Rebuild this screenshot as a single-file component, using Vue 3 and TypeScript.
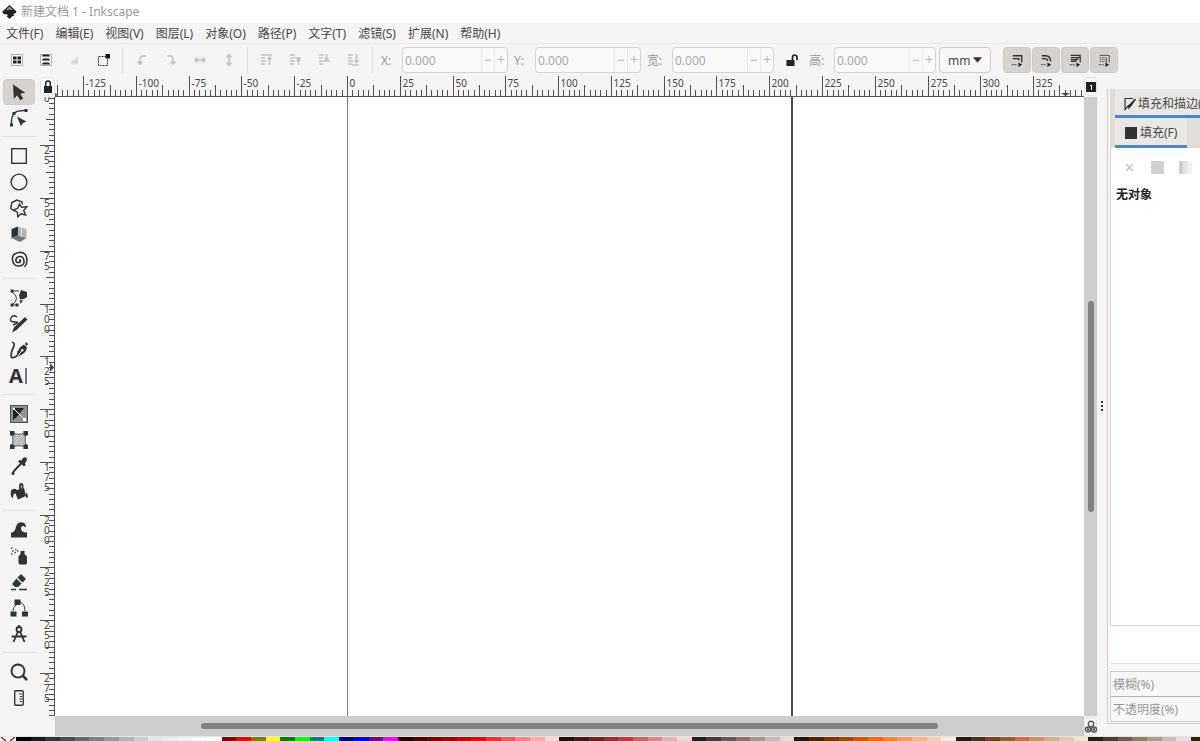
<script setup lang="ts">
import { computed, onMounted, onUnmounted, ref } from 'vue'

interface Tick { pos: number; size: number; label: string }
interface Item { name: string; art: string }

const menus: string[] = ['文件(F)', '编辑(E)', '视图(V)', '图层(L)', '对象(O)', '路径(P)', '文字(T)', '滤镜(S)', '扩展(N)', '帮助(H)']

const scale = 2.111
const originX = 292.5
const originY = -4.5
const pageRight = originX + 210 * scale

const viewWidth = ref(window.innerWidth)
const viewHeight = ref(window.innerHeight)
function measure(): void {
  viewWidth.value = window.innerWidth
  viewHeight.value = window.innerHeight
}
onMounted(() => window.addEventListener('resize', measure))
onUnmounted(() => window.removeEventListener('resize', measure))

function makeTicks(origin: number, length: number, sizes: number[]): Tick[] {
  const step = 2.5 * scale
  const list: Tick[] = []
  for (let n = Math.ceil(-origin / step) - 1; origin + n * step < length; n++) {
    const major = n % 10 === 0
    const size = major ? sizes[0] : n % 5 === 0 ? sizes[1] : sizes[2]
    list.push({ pos: Math.round(origin + n * step) + 0.5, size, label: major ? String((n / 10) * 25) : '' })
  }
  return list
}
const hTicks = computed(() => makeTicks(originX - 0.5, viewWidth.value - 172, [20, 11, 6]))
const vTicks = computed(() => makeTicks(originY, viewHeight.value - 122, [14, 8, 5]))

const ghost = 'fill="none" stroke="#c4c2c0" stroke-width="1.6"'
const bars = '<path d="M2 3h5M2 6h4M2 9h5M2 12h4" stroke="#c4c2c0" stroke-width="1.4"/>'
const actionGroups: Item[][] = [
  [
    { name: '全选', art: '<rect x="2.5" y="2.5" width="11" height="11" fill="none" stroke="#777" stroke-dasharray="1 1"/><path d="M4 4.5h3.5v3H4zM8.5 4.5H12v3H8.5zM4 8.5h3.5v3H4zM8.5 8.5H12v3H8.5z" fill="#222"/>' },
    { name: '在所有图层中全选', art: '<rect x="2.5" y="2.5" width="11" height="11" fill="none" stroke="#777" stroke-dasharray="1 1"/><path d="M5 2.5h6l1 2H4zM5 6.5h6l1 2H4zM5 10.5h6l1 2H4z" fill="#222"/>' },
    { name: '取消选择', art: '<path d="M4 9l3-1 4-4v7l-4 2-3-1z" fill="#dddbd9"/>' },
    { name: '切换选择框', art: '<rect x="2.5" y="4.5" width="9" height="9" fill="none" stroke="#333" stroke-dasharray="2 1"/><path d="M9.5 2H14v4.5H9.5z" fill="#111"/>' }
  ],
  [
    { name: '逆时针旋转', art: `<path d="M12 4H9Q6 4 6 8v4M3.5 9.5L6 12l2.5-2.5" ${ghost}/>` },
    { name: '顺时针旋转', art: `<path d="M4 4h3q3 0 3 4v4M7.5 9.5L10 12l2.5-2.5" ${ghost}/>` },
    { name: '水平翻转', art: `<path d="M3 8h10M5.5 5.5L3 8l2.5 2.5M10.5 5.5L13 8l-2.5 2.5" ${ghost}/>` },
    { name: '垂直翻转', art: `<path d="M8 3v10M5.5 5.5L8 3l2.5 2.5M5.5 10.5L8 13l2.5-2.5" ${ghost}/>` }
  ],
  [
    { name: '置于顶层', art: `${bars}<path d="M7 3h6M10.5 13V5M8.5 7.5l2-2 2 2" ${ghost}/>` },
    { name: '提升一层', art: `${bars}<path d="M7 6h6M10.5 13V7M8.5 9l2-2 2 2" ${ghost}/>` },
    { name: '降低一层', art: `${bars}<path d="M7 9h6M9.5 2v6M7.5 6l2 2 2-2" ${ghost}/>` },
    { name: '置于底层', art: `${bars}<path d="M6 13h7M10.5 2v9M8.5 8.5l2 2 2-2" ${ghost}/>` }
  ]
]

const tail = '<path d="M2 12.5h6" stroke="#333" stroke-dasharray="2 1"/><path d="M9 10l4 2.5L9 15z" fill="#222"/>'
const toggles: Item[] = [
  { name: '缩放描边宽度', art: '<path d="M3 3h9.5v7M3 6h6.5v2" fill="none" stroke="#333" stroke-width="1.5"/>' + tail },
  { name: '缩放圆角', art: '<path d="M3 3h4q5 0 5.5 6M3 6h3q3 0 3.5 2.5" fill="none" stroke="#333" stroke-width="1.5"/>' + tail },
  { name: '移动渐变', art: '<path d="M3 2.5h10V10M3 5h7M3 7h6M3 9h5M8 9l4-5" fill="none" stroke="#333" stroke-width="1.3"/>' + tail },
  { name: '移动图案', art: '<path d="M3 2.5h10V10M10 5v5" fill="none" stroke="#444"/><path d="M3 5h6M3 7h6M3 9h6" stroke="#444" stroke-dasharray="1.5 1"/>' + tail }
]

const line = 'fill="none" stroke="#2e3436" stroke-width="1.4"'
const toolGroups: Item[][] = [
  [
    { name: '选择工具', art: '<path d="M4 2.5l.8 14.5 3.4-3.7 3 5 3-1.8-3-4.8 5-1z"/>' },
    { name: '节点工具', art: `<path d="M2.5 17Q2 8 5.5 5T17 2.5" ${line}/><path d="M1 15.5h3v3H1zM3.5 4h3v3h-3zM15.5 1h3v3h-3zM8 8.5l9.5 5-3.5 1.5-2.2 3z"/>` }
  ],
  [
    { name: '矩形', art: `<rect x="2.7" y="2.7" width="14.6" height="14.6" ${line}/>` },
    { name: '圆形', art: `<circle cx="10" cy="10" r="7.9" ${line}/>` },
    { name: '星形', art: `<path d="M6 13.5L1.8 10.5l1-6L8 2l5 2 .5 2.5" ${line}/><path d="M10.5 6l2 3.3 5.2-.5-3 3.7 2 4.5-4.5-1.2-3.5 3-.3-4.5-3.6-2.5 4-1.5z" ${line}/>` },
    { name: '3D 盒子', art: '<path d="M2.5 5L9 2.5v9L2.5 14z"/><path d="M9 2.5L17.5 5v9L9 11.5z" fill="#b5b5b5"/><path d="M2.5 14L9 11.5l8.5 2.5L11 18z" fill="#777"/><path d="M12.5 4v9" stroke="#e4e4e4"/>' },
    { name: '螺旋', art: '<path d="M10 10.5q1.5-1 1.5.5T9 12.5 7 9.5 11 6.5t4 4.5-5 5-6.5-6T10 2.5t8 8q0 4-2.5 6.5" fill="none" stroke="#2e3436" stroke-width="1.6"/>' }
  ],
  [
    { name: '贝塞尔', art: '<path d="M3 3h7M3 4q9 6 0 13h4" fill="none" stroke="#2e3436"/><path d="M1.5 1.5h3v3h-3zM1.5 15.5h3v3h-3zM6.5 15.5h3v3h-3zM12 2l6 2v5l-3 2-4 .5-1-4zM10.5 12.5l3.5-.5-2.5 4z"/>' },
    { name: '铅笔', art: '<path d="M8 3Q4 0 2 4t4 4-2 3" fill="none" stroke="#2e3436" stroke-width="1.4"/><path d="M16 3l2.5 2.6L7.5 16 3 18.5l2-5z"/>' },
    { name: '书法', art: '<path d="M3 2q3.5 1 1.5 5T2 15t4 2 3-6" fill="none" stroke="#2e3436" stroke-width="1.7"/><path d="M17 2l2 2-1.5 2L16 4zM15 4.5l3 3Q17 14 8 17q0-9 7-12.5z"/><path d="M8.5 16.5l4.5-6" stroke="#f5f4f2"/><circle cx="13.2" cy="10.2" r="1.2" fill="#f5f4f2"/>' },
    { name: '文字', art: '<text x="0" y="17" font-family="Noto Sans" font-size="20" font-weight="700">A</text><path d="M17 2v16" stroke="#2e3436" stroke-width="1.3"/>' }
  ],
  [
    { name: '渐变', art: '<rect x="1.5" y="1.5" width="17" height="17" fill="#8d9496" stroke="#555"/><path d="M4 4h11l-5 6zM4 4v12l7-6z" fill="#222"/><path d="M5 5l10 10" stroke="#fff"/><path d="M4 4h2v2H4zM14 14h3v3h-3z" fill="#fff"/>' },
    { name: '网格', art: '<path d="M3 3q7 3 14 0-2 7 0 14-7-3-14 0 2-7 0-14z" fill="#c4c6c6" stroke="#555"/><path d="M4 8l5-4M4 13l9-9M6 16L16 6M11 16l5-5" stroke="#aaa"/><path d="M1 1h4.5v4.5H1zM14.5 1H19v4.5h-4.5zM1 14.5h4.5V19H1zM14.5 14.5H19V19h-4.5z"/>' },
    { name: '取色', art: '<path d="M12 7.5L5 15l-1.5 3" fill="none" stroke="#2e3436" stroke-width="2"/><path d="M14 2q3-2 4 1 0 2-2 4l.5 2-1.5 1.5-6-5 1.5-1.5 2 .5z"/><circle cx="4" cy="17.5" r="1.5"/>' },
    { name: '油漆桶', art: '<path d="M2 8.5Q5 5.5 8 8l7-2 2 8-8 3.500L6.5 11.5Q4 11 4 16q-3 0-2-7.5z"/><path d="M11 9V3q1.5-2 2.5 0v5" fill="none" stroke="#2e3436" stroke-width="1.8"/><path d="M17.5 10q2.5 5 .5 6-2 0-.5-6z"/>' }
  ],
  [
    { name: '调节', art: '<path d="M2 17.5v-5q4 0 5-6 2-5 7-4 3 1 3 5l-2.5-1.5q-2.5-.5-2.5 2.500 0 4 6 4v5z"/>' },
    { name: '喷绘', art: '<path d="M9.5 10.5l2-2.5V5h4v3l2.5 2.5v6q0 2-1.5 2H11q-1.5 0-1.5-2z"/><path d="M2 2h1.5M6 3.5h1.5M3 5h1.5M2 8h1.5M5.5 6.5H7M8 5h1.5" stroke="#555" stroke-width="1.5"/>' },
    { name: '橡皮擦', art: '<path d="M12 2l5 5-3.5 3.5-5-5zM7.5 6.5l5 5L9 15H6l-3-3z"/><path d="M2 17.5h5M10 17.5h8" stroke="#2e3436" stroke-width="1.3"/>' },
    { name: '连接器', art: '<path d="M5.5 1.5h6V7h-6zM1.5 13.5h6v5h-6zM13 13.5h6v5h-6z"/><path d="M7 7q-3 2-3 6M11 4q5 2 5 9" fill="none" stroke="#2e3436"/>' },
    { name: '测量', art: '<circle cx="10" cy="5.5" r="2.5" fill="none" stroke="#2e3436" stroke-width="1.8"/><path d="M10 1v2M9 7.5L4.5 18M11 7.5L15.5 18M2.5 12.5h15" fill="none" stroke="#2e3436" stroke-width="1.8"/>' }
  ],
  [
    { name: '缩放', art: '<circle cx="9" cy="9" r="6.5" fill="none" stroke="#2e3436" stroke-width="1.9"/><path d="M13.5 13.5L18 18" stroke="#2e3436" stroke-width="2.5"/>' },
    { name: '度量', art: `<rect x="5.7" y="2.7" width="8.5" height="14.6" rx="1" ${line}/><path d="M10 6h3M11 8.5h2M10 11h3M11 13.5h2" stroke="#2e3436"/>` }
  ]
]

const palette: string[] = (
  '000000 1a1a1a 333333 4d4d4d 666666 808080 999999 b3b3b3 cccccc e6e6e6 ececec f2f2f2 f9f9f9 ffffff ' +
  '800000 ff0000 808000 ffff00 008000 00ff00 008080 00ffff 000080 0000ff 800080 ff00ff ' +
  '2b0000 550000 800000 aa0000 d40000 ff0000 ff2a2a ff5555 ff8080 ffaaaa ffd5d5 ' +
  '280b0b 501616 782121 a02c2c c83737 d35f5f de8787 e9afaf f4d7d7 241c1c 483737 6c5353 916f6f ac9393 c8b7b7 e3dbdb ' +
  '2b1100 552200 803300 aa4400 d45500 ff6600 ff7f2a ff9955 ffb380 ffccaa ffe6d5 ' +
  '28170b 502d16 784421 a05a2c c87137 d38d5f deaa87 e9c6af f4e3d7 241f1c 483e37 6c5d53 917c6f ac9d93 c8beb7 e3dedb 2b2200'
).split(' ')

const active = ref('选择工具')
const unit = ref('mm')
</script>

<template>
  <div class="app">
    <header class="title">
      <svg class="logo" viewBox="0 0 16 16"><path d="M8 .5L15 7q1 2-1.5 2.5l-2 .5 2 1.5-2.5 1-3 3-3-3 1.5-1.5L2 10Q-.5 9 1 7z" fill="#1b1f24" /><path d="M8 2l3.5 3.5L9.5 6 8 5 6 6.5 4.5 5.5z" fill="#8d9aaa" /></svg>
      <span>新建文档 1 - Inkscape</span>
    </header>
    <nav class="menu">
      <button v-for="m in menus" :key="m" type="button">{{ m }}</button>
    </nav>
    <div class="bar">
      <div v-for="(g, i) in actionGroups" :key="i" class="group">
        <button v-for="a in g" :key="a.name" type="button" class="act" :aria-label="a.name"><svg viewBox="0 0 16 16" v-html="a.art" /></button>
      </div>
      <label class="lab first" for="fx">X:</label>
      <div class="spin"><input id="fx" value="0.000" disabled><button type="button" aria-label="减少 X" disabled>−</button><button type="button" aria-label="增加 X" disabled>+</button></div>
      <label class="lab" for="fy">Y:</label>
      <div class="spin"><input id="fy" value="0.000" disabled><button type="button" aria-label="减少 Y" disabled>−</button><button type="button" aria-label="增加 Y" disabled>+</button></div>
      <label class="lab wide" for="fw">宽:</label>
      <div class="spin short"><input id="fw" value="0.000" disabled><button type="button" aria-label="减少宽" disabled>−</button><button type="button" aria-label="增加宽" disabled>+</button></div>
      <button type="button" class="act ratio" aria-label="锁定宽高比"><svg viewBox="0 0 16 16"><path d="M2.5 8h8v6h-8z" fill="#222" /><path d="M8.5 8V5.5q0-2.5 2.2-2.5T13 5.5V8" fill="none" stroke="#222" stroke-width="1.7" /></svg></button>
      <label class="lab wide tight" for="fh">高:</label>
      <div class="spin short"><input id="fh" value="0.000" disabled><button type="button" aria-label="减少高" disabled>−</button><button type="button" aria-label="增加高" disabled>+</button></div>
      <div class="unit">
        <select v-model="unit" aria-label="单位"><option>mm</option><option>px</option></select>
        <svg viewBox="0 0 10 6"><path d="M0 0h10L5 6z" fill="#2e3436" /></svg>
      </div>
      <div class="toggles">
        <button v-for="t in toggles" :key="t.name" type="button" aria-pressed="true" :aria-label="t.name"><svg viewBox="0 0 16 16" v-html="t.art" /></button>
      </div>
    </div>

    <main class="main">
      <aside class="tools">
        <div v-for="(g, i) in toolGroups" :key="i" class="tgroup">
          <button v-for="t in g" :key="t.name" type="button" :class="{ on: active === t.name }" :aria-label="t.name" @click="active = t.name"><svg viewBox="0 0 20 20" fill="#2e3436" v-html="t.art" /></button>
        </div>
      </aside>

      <section class="work">
        <button type="button" class="corner" aria-label="锁定参考线"><svg viewBox="0 0 14 18"><path d="M3 8h8v7H3z" fill="#222" /><path d="M4.7 8V5.5Q4.7 3 7 3t2.3 2.5V8" fill="none" stroke="#222" stroke-width="1.5" /></svg></button>
        <svg class="hruler">
          <g v-for="t in hTicks" :key="t.pos">
            <line :x1="t.pos" :x2="t.pos" :y1="20 - t.size" y2="20" />
            <text v-if="t.label" :x="t.pos + 2" y="11">{{ t.label }}</text>
          </g>
          <line x1="0" x2="100%" y1="20.5" y2="20.5" />
          <path d="M1006 17h9l-4.5 3zM1010 15h1v3h-1zM0 17l3 2-3 1z" />
        </svg>
        <button type="button" class="corner" aria-label="颜色管理"><svg viewBox="0 0 14 18"><rect x="2" y="4" width="10" height="10" fill="#222" /><path d="M7.5 7v5M6 7.5h1.5" stroke="#fff" /></svg></button>
        <svg class="vruler">
          <g v-for="t in vTicks" :key="t.pos">
            <line :y1="t.pos" :y2="t.pos" :x1="14 - t.size" x2="14" />
            <text v-for="(c, k) in t.label.split('')" :key="k" x="4" :y="t.pos + 8 + k * 10">{{ c }}</text>
          </g>
          <line x1="14.5" x2="14.5" y1="0" y2="100%" />
          <path d="M10 266v9l4-4.5z" />
        </svg>
        <svg class="canvas">
          <line :x1="originX" :x2="originX" y1="0" y2="100%" stroke="#777" />
          <line :x1="Math.ceil(pageRight) + 1" :x2="Math.ceil(pageRight) + 1" y1="0" y2="100%" stroke="#4a4a4a" stroke-width="2" />
        </svg>
        <div class="vscroll"><i class="lead" /><i class="thumb" /><i class="rest" /></div>
        <div class="blank" />
        <div class="hscroll"><i class="lead" /><i class="thumb" /><i class="rest" /></div>
        <button type="button" class="corner" aria-label="缩放画布"><svg viewBox="0 0 14 18"><g fill="none" stroke="#555" stroke-width="1.4"><circle cx="7" cy="6" r="2.7" /><circle cx="4" cy="11.5" r="2.5" /><circle cx="10" cy="11.5" r="2.5" /></g><path d="M3 10.5h2v2H3zM9 10.5h2v2H9z" fill="#333" /></svg></button>
      </section>

      <div class="splitter"><i /><i /><i /></div>

      <aside class="dock">
        <div class="tabs top">
          <button type="button"><svg viewBox="0 0 14 14"><path d="M10 1.5H2v11L6 8" fill="none" stroke="#333" stroke-width="1.2" /><path d="M12 1.5l1 1-5 7-3 3 .5-4z" fill="#222" /></svg>填充和描边(F)</button>
        </div>
        <div class="tabs sub">
          <button type="button"><svg viewBox="0 0 14 14"><path d="M1 1h12v12H1z" fill="#2e3436" /></svg>填充(F)</button>
        </div>
        <div class="body">
          <div class="paints">
            <button type="button" aria-label="无填充"><svg viewBox="0 0 14 14"><path d="M4 4l6 6M10 4l-6 6" stroke="#c4c4c4" stroke-width="1.5" /></svg></button>
            <button type="button" aria-label="单色"><svg viewBox="0 0 14 14"><path d="M1 1h12v12H1z" fill="#d0d0d0" /></svg></button>
            <button type="button" aria-label="线性渐变"><svg viewBox="0 0 14 14"><path d="M1 1h4v12H1z" fill="#ccc" /><path d="M5 1h4v12H5z" fill="#e2e2e2" /><path d="M9 1h4v12H9z" fill="#f0f0f0" /></svg></button>
          </div>
          <strong>无对象</strong>
        </div>
        <div class="gap" />
        <div class="rows">
          <div class="row"><label for="blur">模糊(%)</label><input id="blur" type="range" disabled></div>
          <div class="row"><label for="opac">不透明度(%)</label><input id="opac" type="range" disabled></div>
        </div>
      </aside>
    </main>

    <footer class="palette">
      <button type="button" class="none" aria-label="无颜色"><svg viewBox="0 0 16 4"><path d="M1 0l5 4M15 0l-5 4" stroke="#6b3030" stroke-width="1.5" /></svg></button>
      <button v-for="(c, i) in palette" :key="i" type="button" :aria-label="'#' + c" :style="{ background: '#' + c }" />
    </footer>
  </div>
</template>

<style>
html, body { margin: 0; overflow: hidden; }
</style>

<style scoped>
.app { display: flex; flex-direction: column; height: 100vh; background: #f5f4f2; color: #464949; font-family: "Noto Sans", "Noto Sans CJK SC", sans-serif; font-size: 12px; line-height: 18px; }
.app * { box-sizing: border-box; }
button, input, select { font: inherit; color: inherit; border: 0; padding: 0; margin: 0; background: none; }
svg { display: block; }
.title { display: flex; align-items: center; gap: 4px; height: 23px; padding: 0 2px; background: #fff; color: #999; flex: none; }
.logo { width: 15px; height: 16px; }
.menu { display: flex; align-items: center; gap: 12px; height: 21px; padding: 2px 6px 0; flex: none; border-bottom: 1px solid #ebe9e7; white-space: nowrap; }
.bar { display: flex; align-items: center; height: 32px; padding-left: 2px; flex: none; }
.group { display: flex; padding-right: 4px; margin-right: 4px; border-right: 1px solid #dedbd8; flex: none; }
.act { display: grid; place-items: center; width: 29px; height: 26px; flex: none; }
.act svg { width: 16px; height: 16px; }
.lab { width: 21px; margin-left: 6px; padding-top: 2px; color: #999; flex: none; white-space: nowrap; }
.lab.first { margin-left: 4px; }
.lab.wide { width: 25px; }
.lab.tight { margin-left: 3px; }
.spin { display: flex; width: 106px; height: 26px; border: 1px solid #d6d3d0; border-radius: 4px; background: #faf9f8; color: #aaa; overflow: hidden; flex: none; }
.spin.short { width: 102px; }
.spin input { flex: 1; min-width: 0; padding: 2px 0 0 2px; }
.spin button { width: 13px; border-left: 1px solid #eceae8; color: #bbb; font-size: 14px; line-height: 22px; text-align: center; }
.ratio { margin: 0 0 0 3px; }
.unit { position: relative; width: 52px; height: 26px; margin-left: 3px; flex: none; }
.unit select { appearance: none; width: 100%; height: 100%; padding: 2px 0 0 8px; border: 1px solid #d0ccc8; border-radius: 4px; background: #f8f7f6; }
.unit svg { position: absolute; right: 9px; top: 10px; width: 9px; height: 6px; pointer-events: none; }
.toggles { display: flex; gap: 1px; margin-left: 12px; }
.toggles button { display: grid; place-items: center; width: 28px; height: 26px; border: 1px solid #d0cac5; border-radius: 4px; background: #d8d2cd; }
.toggles svg { width: 15px; height: 15px; }
.main { display: flex; flex: 1; min-height: 0; }
.tools { width: 40px; padding: 3px 4px 0 3px; flex: none; }
.tgroup + .tgroup { margin-top: 5px; padding-top: 6px; border-top: 1px solid #e2dfdc; }
.tools button { display: grid; place-items: center; width: 32px; height: 26px; border: 1px solid transparent; border-radius: 4px; }
.tools button.on { background: #d8d2cd; border-color: #d0cac5; }
.tools svg { width: 20px; height: 20px; overflow: visible; }
.work { display: grid; grid-template-columns: 15px minmax(0, 1fr) 13px; grid-template-rows: 21px minmax(0, 1fr) 20px; flex: 1; min-width: 0; }
.work > * { min-width: 0; min-height: 0; width: 100%; height: 100%; }
.work > .corner { display: flex; align-items: center; justify-content: center; height: 19px; margin-top: 1px; border: 1px solid #e4e1de; border-radius: 4px; background: #faf9f8; }
.corner svg { width: 14px; height: 18px; flex: none; }
.hruler, .vruler { overflow: hidden; fill: #464949; font-size: 10px; }
.hruler line, .vruler line { stroke: #505050; }
.canvas { background: #fff; }
.vscroll, .hscroll { display: flex; background: #cdcdcd; }
.vscroll { flex-direction: column; align-items: center; }
.hscroll { align-items: center; }
.thumb { background: #7e8281; border-radius: 3px; }
.vscroll .lead { flex: 204; }
.vscroll .thumb { flex: 211; width: 6px; }
.vscroll .rest { flex: 204; }
.hscroll .lead { flex: 146; }
.hscroll .thumb { flex: 737; height: 6px; }
.hscroll .rest { flex: 146; }
.splitter { display: flex; flex-direction: column; align-items: center; justify-content: center; gap: 2px; width: 10px; flex: none; }
.splitter i { width: 2px; height: 2px; background: #333; }
.dock { display: flex; flex-direction: column; width: 93px; margin: 13px 0 12px; padding-left: 2px; border-left: 1px solid #cfccc9; border-bottom: 1px solid #cfccc9; background: #f8f7f6; overflow: hidden; flex: none; }
.tabs { display: flex; background: #e0dcd8; padding-left: 5px; flex: none; white-space: nowrap; }
.tabs button { display: flex; align-items: center; padding-top: 3px; border-bottom: 3px solid #4a86cf; }
.tabs svg { width: 14px; height: 14px; }
.top button { height: 29px; padding-left: 8px; gap: 1px; background: #e9e6e3; flex: none; }
.sub button { height: 30px; width: 72px; padding-left: 9px; gap: 2px; background: #e9e6e3; }
.body { flex: 1; padding: 12px 0 0 5px; background: #fff; border-left: 1px solid #d4d1ce; border-bottom: 1px solid #d4d1ce; color: #222; }
.paints { display: flex; gap: 13px; margin-bottom: 11px; padding-left: 6px; width: 96px; }
.paints svg { width: 15px; height: 15px; }
.gap { height: 38px; background: #fff; border-bottom: 1px solid #e4e2e0; flex: none; }
.rows { margin: 7px 0 1px; border: 1px solid #d0cdca; border-right: 0; color: #999; flex: none; }
.row { display: flex; height: 24px; padding: 1px 0 0 2px; overflow: hidden; white-space: nowrap; }
.row:first-child { height: 25px; border-bottom: 1px solid #b5b2af; }
.row label { flex: none; width: 96px; line-height: 24px; }
.row input { flex: none; }
.palette { display: flex; height: 5px; border-top: 1px solid #e6e4e2; flex: none; }
.palette button { flex: 1; min-width: 0; }
.palette button:last-child { flex: 0.6; }
.palette .none { flex: 0 0 16px; background: #fff; }
.palette svg { width: 16px; height: 4px; }
</style>
